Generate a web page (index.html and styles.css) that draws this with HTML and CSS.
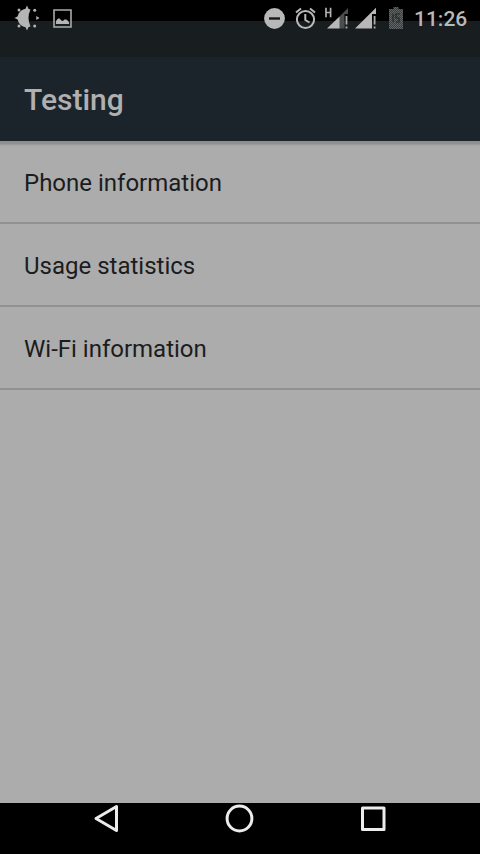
FILE: index.html
```html
<!DOCTYPE html>
<html lang="en">
<head>
<meta charset="utf-8">
<title>Testing</title>
<link rel="stylesheet" href="styles.css">
</head>
<body>
<div class="screen">
  <header class="status">
    <div class="notifications">
      <svg width="26" height="26" viewBox="0 0 26 26" fill="#b5b5b5">
        <path d="M16.500 4.600A9.200 9.200 0 1 0 16.500 21.400Q12.500 13 16.500 4.600Z"/>
        <path d="M13 .5l1.800 4h-3.600zM13 25.500l1.800-4h-3.600zM.5 13l4-2v4zM25.500 13l-3.200-2v4z"/>
        <circle cx="5" cy="5" r="1.500"/><circle cx="20.700" cy="5.200" r="1.500"/><circle cx="5" cy="21" r="1.500"/><circle cx="20.700" cy="21" r="1.500"/>
      </svg>
      <svg width="19" height="19" viewBox="0 0 19 19">
        <path d="M1 1h17v17H1z" fill="none" stroke="#aaa" stroke-width="1.6"/>
        <path d="M3 15v-3l2-2.500h1.500L9 12l1.500-.5 1-1h2l2.500 2.500V15z" fill="#b5b5b5"/>
      </svg>
    </div>
    <div class="indicators">
      <svg class="dnd" width="21" height="21" viewBox="0 0 21 21">
        <circle cx="10.5" cy="10.5" r="10.4" fill="#b8b8b8"/>
        <path d="M5 10.500h11" stroke="#151819" stroke-width="2.4"/>
      </svg>
      <svg class="alarm" width="21" height="22" viewBox="0 0 21 22" fill="none" stroke="#b8b8b8" stroke-width="2">
        <circle cx="10.5" cy="12.500" r="8.600"/>
        <path d="M10.300 7v6l4.200 2.500M1 5.500l5-4M20 5.500l-5-4"/>
      </svg>
      <svg class="signal" width="24" height="22" viewBox="0 0 24 22">
        <path d="M1 .8v9.400M5.600 .8v9.400M1 5.500h4.600" stroke="#b0b0b0" stroke-width="1.7"/>
        <path d="M23 1v6h-3.500v14.500H14V10z" fill="#4b4e4f"/>
        <path d="M2 21.500L14.500 9.500v12z" fill="#b8b8b8"/>
        <path d="M21.500 9v8.500M21.500 19.500v2" stroke="#aaa" stroke-width="1.8"/>
      </svg>
      <svg class="signal-two" width="22" height="22" viewBox="0 0 22 22">
        <path d="M0 21.500L21 .8V7h-4v14.500z" fill="#b8b8b8"/>
        <path d="M19.600 9v8.500M19.600 19.500v2" stroke="#aaa" stroke-width="1.8"/>
      </svg>
      <svg class="battery" width="14" height="22" viewBox="0 0 14 22">
        <defs>
          <pattern id="dots" width="2" height="2" patternUnits="userSpaceOnUse">
            <path d="M0 0h2v2H0z" fill="#3b3e3f"/><path d="M0 0h1v1H0zM1 1h1v1H1z" fill="#626566"/>
          </pattern>
        </defs>
        <path d="M4.500 0h5v2H14v20H0V2h4.500z" fill="url(#dots)"/>
        <path d="M4 7v8M11 7H7v4h3v4H7" fill="none" stroke="#222627" stroke-width="1.200"/>
      </svg>
      <span class="clock">11:26</span>
    </div>
  </header>
  <h1 class="appbar">Testing</h1>
  <main class="content">
    <ul class="list">
      <li>Phone information</li>
      <li>Usage statistics</li>
      <li>Wi-Fi information</li>
    </ul>
  </main>
  <nav class="navbar">
    <svg width="28" height="30" viewBox="0 0 28 30"><path d="M4 15.500L24.500 3.500v24z"/></svg>
    <svg width="28" height="30" viewBox="0 0 28 30"><circle cx="13.500" cy="15.500" r="12.400"/></svg>
    <svg width="28" height="30" viewBox="0 0 28 30"><path d="M3.500 5h21.500v21.500H3.500z"/></svg>
  </nav>
</div>
</body>
</html>
```
FILE: styles.css
```css
body {
  margin: 0;
  font-family: Roboto, sans-serif;
}

.screen {
  display: flex;
  flex-direction: column;
  width: 480px;
  height: 854px;
  background: #acacac;
}

svg {
  display: block;
  flex: none;
  overflow: visible;
}

.status {
  display: flex;
  justify-content: space-between;
  align-items: flex-start;
  box-sizing: border-box;
  height: 57px;
  padding: 5px 12px 0 14px;
  background: linear-gradient(#000 21px, #181d20 21px);
}

.notifications {
  display: flex;
  align-items: center;
  gap: 13px;
}

.indicators {
  display: flex;
  align-items: center;
  height: 26px;
}

.dnd {
  margin-right: 10px;
}

.alarm {
  margin-right: 9px;
}

.signal {
  margin-right: 6px;
}

.signal-two {
  margin-right: 12px;
}

.battery {
  margin-right: 11px;
}

.clock {
  width: 54px;
  padding-top: 2px;
  font-size: 21px;
  font-weight: 500;
  line-height: 26px;
  color: #b8b8b8;
}

.appbar {
  box-sizing: border-box;
  height: 84px;
  margin: 0;
  padding-left: 24px;
  background: #1b242a;
  color: #b0b0b0;
  font-size: 30px;
  font-weight: 500;
  line-height: 86px;
}

.content {
  flex: 1;
  background: linear-gradient(#8e8c8d 0, #919091 3px, #a5a5a5 4px, #acacac 6px);
}

.list {
  margin: 0;
  padding: 0;
  list-style: none;
}

.list li {
  box-sizing: border-box;
  height: 83px;
  padding-left: 24px;
  border-bottom: 2px solid #919191;
  color: #1b1c1d;
  font-size: 24px;
  line-height: 85px;
}

.navbar {
  display: flex;
  justify-content: space-between;
  box-sizing: border-box;
  height: 51px;
  padding: 0 93px 0 92px;
  background: #000;
}

.navbar svg {
  fill: none;
  stroke: #ececec;
  stroke-width: 3;
  stroke-linejoin: round;
}
```
